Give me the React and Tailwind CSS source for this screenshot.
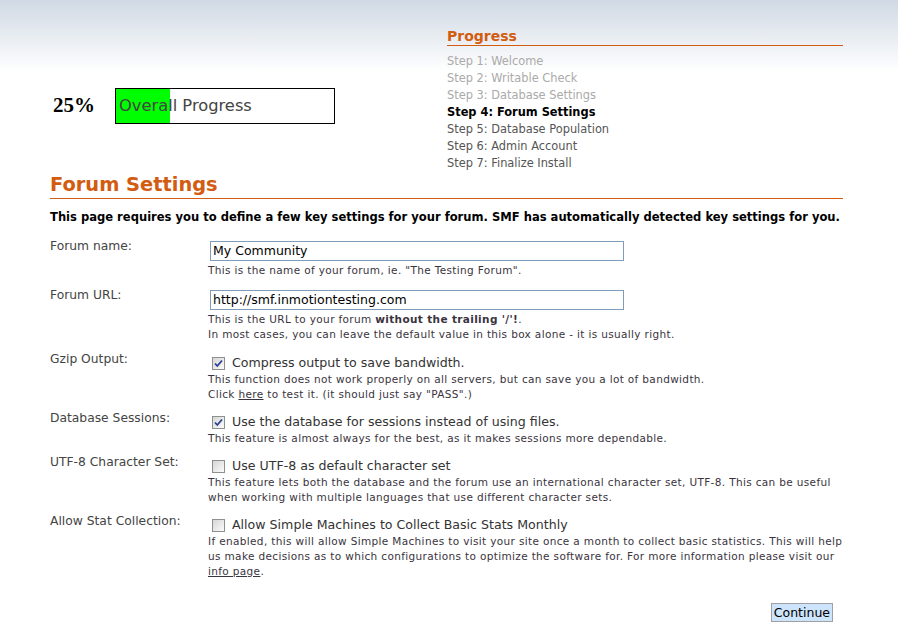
import React from "react";

const F = { fontFamily: '"DejaVu Sans", Verdana, sans-serif' };

function Check({ checked }) {
  return (
    <span className="inline-flex w-[13px] h-[13px] shrink-0 border border-[#8e8f8f] bg-[linear-gradient(135deg,#d6d6d6,#fbfbfb)] items-center justify-center">
      {checked && (
        <svg width="9" height="9" viewBox="0 0 9 9">
          <path d="M1 4.5 L3.3 7 L8 1.5" fill="none" stroke="#2b3e91" strokeWidth="1.8" />
        </svg>
      )}
    </span>
  );
}

function Row({ label, children, gap }) {
  return (
    <div className={"flex " + (gap === "input" ? "mb-[12px]" : "mb-[11px]")}>
      <div className="w-[158px] shrink-0 -mt-[2px] text-[12.3px] leading-[15px] text-[#444]">{label}</div>
      <div className="flex-1">{children}</div>
    </div>
  );
}

function Desc({ children }) {
  return <div className="whitespace-nowrap text-[10.5px] leading-[15px] text-[#3a3440] tracking-[0.35px]">{children}</div>;
}

function CheckLine({ checked, children }) {
  return (
    <div className="flex items-center h-[18px] pl-[4px] gap-[7px] text-[12.6px] text-[#333]">
      <Check checked={checked} />
      <span>{children}</span>
    </div>
  );
}

function Input({ value }) {
  return (
    <div className="ml-[2px] mb-[2px] w-[414px] h-[20px] border border-[#7f9db9] bg-white px-[2px] text-[12.5px] leading-[18px] text-black">
      {value}
    </div>
  );
}

export default function App() {
  const steps = [
    ["Step 1: Welcome", "done"],
    ["Step 2: Writable Check", "done"],
    ["Step 3: Database Settings", "done"],
    ["Step 4: Forum Settings", "cur"],
    ["Step 5: Database Population", "todo"],
    ["Step 6: Admin Account", "todo"],
    ["Step 7: Finalize Install", "todo"],
  ];
  return (
    <div style={F} className="min-h-[630px] w-[898px] bg-[linear-gradient(to_bottom,#d0d9e4_0px,#ffffff_72px)] pl-[50px] pr-[55px] text-black">
      <div className="flex">
        <div className="w-[397px] pt-[88px]">
          <div className="flex items-center">
            <div className="w-[65px] pl-[3px] text-[21px] font-bold" style={{ fontFamily: '"Liberation Serif", serif' }}>25%</div>
            <div className="relative w-[220px] h-[36px] border border-black bg-white">
              <div className="absolute left-0 top-0 bottom-0 w-[54px] bg-[#00ff00]" />
              <div className="relative pl-[3px] text-[16.3px] leading-[34px] text-[#444]">Overall Progress</div>
            </div>
          </div>
        </div>
        <div className="w-[396px] pt-[28px]">
          <div className="text-[14px] font-bold leading-[17px] text-[#d25c10] border-b border-[#d25c10]">Progress</div>
          <div className="mt-[7px] text-[11.4px] leading-[17px]">
            {steps.map(([s, st]) => (
              <div
                key={s}
                className={
                  st === "done" ? "text-[#aaaaaa]" : st === "cur" ? "font-bold text-black" : "text-[#555]"
                }
              >
                {s}
              </div>
            ))}
          </div>
        </div>
      </div>

      <h2 className="mt-[1px] text-[19.4px] font-bold leading-[24px] text-[#d25c10] border-b border-[#d25c10] pb-[1px]">Forum Settings</h2>
      <p className="mt-[11px] text-[11.55px] font-bold leading-[15px] whitespace-nowrap">
        This page requires you to define a few key settings for your forum. SMF has automatically detected key settings for you.
      </p>

      <div className="mt-[16px]">
        <Row label="Forum name:" gap="input">
          <Input value="My Community" />
          <Desc>This is the name of your forum, ie. "The Testing Forum".</Desc>
        </Row>
        <Row label="Forum URL:" gap="input">
          <Input value="http://smf.inmotiontesting.com" />
          <Desc>
            This is the URL to your forum <b>without the trailing '/'!</b>.
          </Desc>
          <Desc>In most cases, you can leave the default value in this box alone - it is usually right.</Desc>
        </Row>
        <Row label="Gzip Output:">
          <CheckLine checked>Compress output to save bandwidth.</CheckLine>
          <Desc>This function does not work properly on all servers, but can save you a lot of bandwidth.</Desc>
          <Desc>
            Click <span className="underline">here</span> to test it. (it should just say "PASS".)
          </Desc>
        </Row>
        <Row label="Database Sessions:">
          <CheckLine checked>Use the database for sessions instead of using files.</CheckLine>
          <Desc>This feature is almost always for the best, as it makes sessions more dependable.</Desc>
        </Row>
        <Row label="UTF-8 Character Set:">
          <CheckLine>Use UTF-8 as default character set</CheckLine>
          <Desc>This feature lets both the database and the forum use an international character set, UTF-8. This can be useful</Desc>
          <Desc>when working with multiple languages that use different character sets.</Desc>
        </Row>
        <Row label="Allow Stat Collection:">
          <CheckLine>Allow Simple Machines to Collect Basic Stats Monthly</CheckLine>
          <Desc>If enabled, this will allow Simple Machines to visit your site once a month to collect basic statistics. This will help</Desc>
          <Desc>us make decisions as to which configurations to optimize the software for. For more information please visit our</Desc>
          <Desc>
            <span className="underline">info page</span>.
          </Desc>
        </Row>
      </div>

      <div className="flex justify-end mt-[24px] pr-[10px]">
        <button className="h-[19px] px-[2px] border border-[#a0a0a0] bg-[#cce4fc] text-[12.5px] leading-[17px] text-black">Continue</button>
      </div>
    </div>
  );
}
